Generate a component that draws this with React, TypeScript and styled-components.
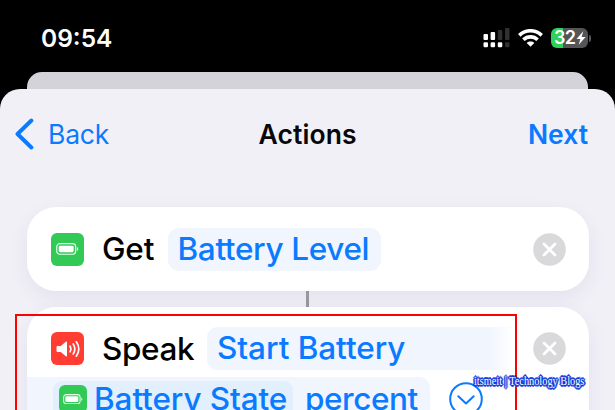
import React from "react";
import styled, { createGlobalStyle } from "styled-components";

const Global = createGlobalStyle`
  * { box-sizing: border-box; }
  html, body { margin: 0; padding: 0; background: #000; overflow: hidden; }
`;

const Screen = styled.div`
  width: 615px;
  height: 410px;
  display: flex;
  flex-direction: column;
  position: relative;
  overflow: hidden;
  background: #000;
  font-family: Inter, "Liberation Sans", sans-serif;
`;

const StatusBar = styled.header`
  height: 72px;
  flex: none;
  display: flex;
  align-items: center;
  padding: 4px 24px 0 41px;
  color: #fff;
`;

const Label = styled.span<{ $size: number; $width: number; $weight?: number; $spacing?: number }>`
  flex: none;
  display: block;
  width: ${(p) => p.$width}px;
  font-size: ${(p) => p.$size}px;
  font-weight: ${(p) => p.$weight ?? 400};
  letter-spacing: ${(p) => p.$spacing ?? 0}px;
  line-height: 42px;
  white-space: nowrap;
`;

const StatusIcons = styled.div`
  margin-left: auto;
  display: flex;
  align-items: center;
  gap: 8px;
`;

const BatteryBody = styled.div`
  width: 37px;
  height: 20px;
  border-radius: 6px;
  display: flex;
  align-items: center;
  padding-left: 3px;
  background: linear-gradient(90deg, #30d158 0 12px, #555557 12px);
`;

const BatteryNumber = styled.span`
  width: 22px;
  font-size: 18px;
  font-weight: 600;
  line-height: 20px;
  letter-spacing: -0.8px;
`;

const BatteryGroup = styled.div`
  display: flex;
  align-items: center;
  gap: 1px;
`;

const BatteryTip = styled.div`
  width: 2px;
  height: 7px;
  border-radius: 0 3px 3px 0;
  background: #555557;
`;

const BackSheet = styled.div`
  height: 17px;
  flex: none;
  margin: 0 27px;
  border-radius: 15px 15px 0 0;
  background: #d4d3d9;
`;

const Sheet = styled.main`
  flex: 1;
  min-height: 0;
  margin-top: -0.5px;
  border-radius: 20px 20px 0 0;
  background: #f1f0f7;
`;

const NavBar = styled.nav`
  height: 118.5px;
  display: grid;
  grid-template-columns: 1fr 98px 1fr;
  padding: 24.5px 27px 0 15px;
  align-items: start;
  color: #0a7aff;
`;

const BackButton = styled.div`
  display: flex;
  align-items: center;
  gap: 14px;
`;

const Title = styled.div`
  color: #08080a;
  margin-left: 6px;
`;

const NextButton = styled.div`
  justify-self: end;
`;

const Card = styled.section<{ $height: number }>`
  height: ${(p) => p.$height}px;
  width: 562px;
  margin: 0 auto 0 26.5px;
  border-radius: 29px;
  overflow: hidden;
  background: #fff;
  box-shadow: 0 7px 20px rgba(60, 40, 110, 0.07);
`;

const ActionRow = styled.div<{ $height: number; $top?: number }>`
  height: ${(p) => p.$height}px;
  display: flex;
  align-items: center;
  padding: ${(p) => p.$top ?? 0}px 22.5px 0 24.5px;
`;

const Tile = styled.div<{ $size: number; $color: string }>`
  width: ${(p) => p.$size}px;
  height: ${(p) => p.$size}px;
  flex: none;
  border-radius: 6px;
  display: grid;
  place-items: center;
  background: ${(p) => p.$color};
`;

const Verb = styled.div<{ $width: number }>`
  width: ${(p) => p.$width}px;
  flex: none;
  padding-left: 18px;
  color: #000;
`;

const Token = styled.div<{ $width: number; $fade?: boolean }>`
  width: ${(p) => p.$width}px;
  height: 43px;
  flex: none;
  border-radius: ${(p) => (p.$fade ? "11px 0 0 11px" : "11px")};
  padding-left: 10px;
  color: #0a7aff;
  background: ${(p) => (p.$fade ? "linear-gradient(90deg, #f0f5fe 92%, #fff)" : "#f0f5fe")};
`;

const Push = styled.div`
  margin-left: auto;
  display: flex;
`;

const Connector = styled.div`
  width: 3.5px;
  height: 16px;
  margin: 0 auto;
  background: #98979e;
`;

const WrappedRow = styled.div`
  display: flex;
  align-items: flex-start;
  height: 60px;
`;

const WrappedToken = styled.div`
  width: 403px;
  height: 60px;
  flex: none;
  display: flex;
  padding: 4px 0 0 26.5px;
  border-radius: 0 11px 0 0;
  color: #0a7aff;
  background: #f0f5fe;
`;

const Variable = styled.div`
  width: 240px;
  height: 42px;
  margin-right: 12px;
  flex: none;
  display: flex;
  align-items: flex-start;
  padding-left: 6px;
  border-radius: 9px 9px 0 0;
  background: #e2effc;
`;

const VariableTile = styled.div`
  padding: 4px 7px 0 0;
`;

const WrappedText = styled.div`
  margin-top: -3px;
`;

const Disclosure = styled.div`
  padding: 5px 0 0 19.5px;
`;

const Highlight = styled.div`
  position: absolute;
  left: 15px;
  top: 314px;
  width: 502px;
  height: 110px;
  border: 2px solid #ff0000;
`;

const Watermark = styled.div`
  position: absolute;
  left: 474px;
  top: 373px;
  font: 12px/17px "Liberation Serif", serif;
  white-space: nowrap;
  color: #fff;
  transform: scaleX(0.86);
  transform-origin: left center;
  text-shadow:
    1px 0 #123bdc, -1px 0 #123bdc, 0 1px #123bdc, 0 -1px #123bdc,
    1px 1px #123bdc, -1px 1px #123bdc, 1px -1px #123bdc, -1px -1px #123bdc,
    2px 0 #123bdc, -2px 0 #123bdc, 0 2px #123bdc, 0 -2px #123bdc;
`;

const Signal = () => (
  <svg width="27" height="20" viewBox="0 0 27 20" fill="#fff">
    <rect x="0.5" y="6" width="4.5" height="6" rx="1" />
    <rect x="7.6" y="4" width="4.5" height="8" rx="1" />
    <rect x="14.8" y="2" width="4.5" height="10" rx="1" fill="#303031" />
    <rect x="22" y="0" width="4.5" height="12" rx="1" fill="#303031" />
    <rect x="0.5" y="14.2" width="4.5" height="5" rx="1.2" />
    <rect x="7.6" y="14.2" width="4.5" height="5" rx="1.2" />
    <rect x="14.8" y="14.2" width="4.5" height="5" rx="1.2" />
    <rect x="22" y="14.2" width="4.5" height="5" rx="1.2" fill="#303031" />
  </svg>
);

const Wifi = () => (
  <svg width="25" height="18" viewBox="0 0 25 18" fill="none" stroke="#fff" strokeWidth="3.6">
    <path d="M1.3 6.4C7.6.2 17.4.2 23.7 6.4" />
    <path d="M5.4 10.8C9.4 6.9 15.6 6.9 19.6 10.8" />
    <path d="M12.5 17.8 8.7 14C10.8 12.1 14.2 12.1 16.3 14Z" fill="#fff" stroke="none" />
  </svg>
);

const Bolt = () => (
  <svg width="10" height="14" viewBox="0 0 10 14" fill="#fff">
    <path d="M7.3.3.5 7.9h3.9L2.7 13.7 9.6 6H5.6Z" />
  </svg>
);

const Chevron = () => (
  <svg width="19" height="32" viewBox="0 0 19 32" fill="none" stroke="#0a7aff" strokeWidth="3.9" strokeLinecap="round" strokeLinejoin="round">
    <path d="M16.4 2.5 2.5 16l13.9 13.5" />
  </svg>
);

const BatteryGlyph = ({ width = 23 }: { width?: number }) => (
  <svg width={width} height={width * 0.52} viewBox="0 0 23 12">
    <rect x="0.7" y="0.7" width="19" height="10.6" rx="3" fill="none" stroke="#e5ffe9" strokeWidth="1.2" />
    <rect x="2.7" y="2.7" width="15" height="6.6" rx="1.4" fill="#fff" />
    <path d="M21 4c1.7.7 1.7 3.3 0 4Z" fill="#e5ffe9" />
  </svg>
);

const Speaker = () => (
  <svg width="24" height="18" viewBox="0 0 24 18" fill="none" stroke="#fff" strokeWidth="1.7" strokeLinecap="round">
    <path d="M1.6 6h3.2l5-4.2q1.2-.7 1.2.7v13q0 1.4-1.2.7l-5-4.2H1.6Q.5 12 .5 10.9V7.1Q.5 6 1.6 6Z" fill="#fff" stroke="none" />
    <path d="M14 6.2q1.7 2.8 0 5.6M17.2 4q3.3 5 0 10M20.3 1.8q5 7.2 0 14.4" />
  </svg>
);

const Remove = () => (
  <svg width="33" height="33" viewBox="0 0 33 33">
    <circle cx="16.5" cy="16.5" r="16.3" fill="#d9d9db" />
    <path d="m11 11 11 11M22 11 11 22" stroke="#fff" strokeWidth="2.7" strokeLinecap="round" />
  </svg>
);

const Expand = () => (
  <svg width="34" height="34" viewBox="0 0 34 34" fill="none" stroke="#0a7aff" strokeWidth="2" strokeLinecap="round" strokeLinejoin="round">
    <circle cx="17" cy="17" r="15.8" />
    <path d="m9.3 14.3 7.7 7.2 7.7-7.2" />
  </svg>
);

export default function App() {
  return (
    <Screen>
      <Global />
      <StatusBar>
        <Label $size={24.5} $width={80} $weight={600} $spacing={0}>09:54</Label>
        <StatusIcons>
          <Signal />
          <Wifi />
          <BatteryGroup>
            <BatteryBody>
              <BatteryNumber>32</BatteryNumber>
              <Bolt />
            </BatteryBody>
            <BatteryTip />
          </BatteryGroup>
        </StatusIcons>
      </StatusBar>
      <BackSheet />
      <Sheet>
        <NavBar>
          <BackButton>
            <Chevron />
            <Label $size={26.5} $width={64} $spacing={-0.2}>Back</Label>
          </BackButton>
          <Title>
            <Label $size={26.5} $width={100} $weight={600} $spacing={0.1}>Actions</Label>
          </Title>
          <NextButton>
            <Label $size={26.5} $width={60} $weight={600} $spacing={0}>Next</Label>
          </NextButton>
        </NavBar>
        <Card $height={84}>
          <ActionRow $height={84}>
            <Tile $size={33} $color="#32c957"><BatteryGlyph /></Tile>
            <Verb $width={83.5}>
              <Label $size={31.5} $width={60} $weight={500} $spacing={-0.2}>Get</Label>
            </Verb>
            <Token $width={213}>
              <Label $size={31.5} $width={195} $weight={500} $spacing={-0.35}>Battery Level</Label>
            </Token>
            <Push><Remove /></Push>
          </ActionRow>
        </Card>
        <Connector />
        <Card $height={150}>
          <ActionRow $height={70} $top={13}>
            <Tile $size={33} $color="#ff3d33"><Speaker /></Tile>
            <Verb $width={123}>
              <Label $size={31.5} $width={95} $weight={500} $spacing={-0.4}>Speak</Label>
            </Verb>
            <Token $width={306} $fade>
              <Label $size={31.5} $width={195} $weight={500} $spacing={-0.05}>Start Battery</Label>
            </Token>
            <Push><Remove /></Push>
          </ActionRow>
          <WrappedRow>
            <WrappedToken>
              <Variable>
                <VariableTile>
                  <Tile $size={28} $color="#32c957"><BatteryGlyph width={20} /></Tile>
                </VariableTile>
                <WrappedText>
                  <Label $size={31.5} $width={192} $weight={500} $spacing={-0.1}>Battery State</Label>
                </WrappedText>
              </Variable>
              <WrappedText>
                <Label $size={31.5} $width={115} $weight={500} $spacing={-0.45}>percent</Label>
              </WrappedText>
            </WrappedToken>
            <Disclosure><Expand /></Disclosure>
          </WrappedRow>
        </Card>
      </Sheet>
      <Highlight />
      <Watermark>itsmeit | Technology Blogs</Watermark>
    </Screen>
  );
}
